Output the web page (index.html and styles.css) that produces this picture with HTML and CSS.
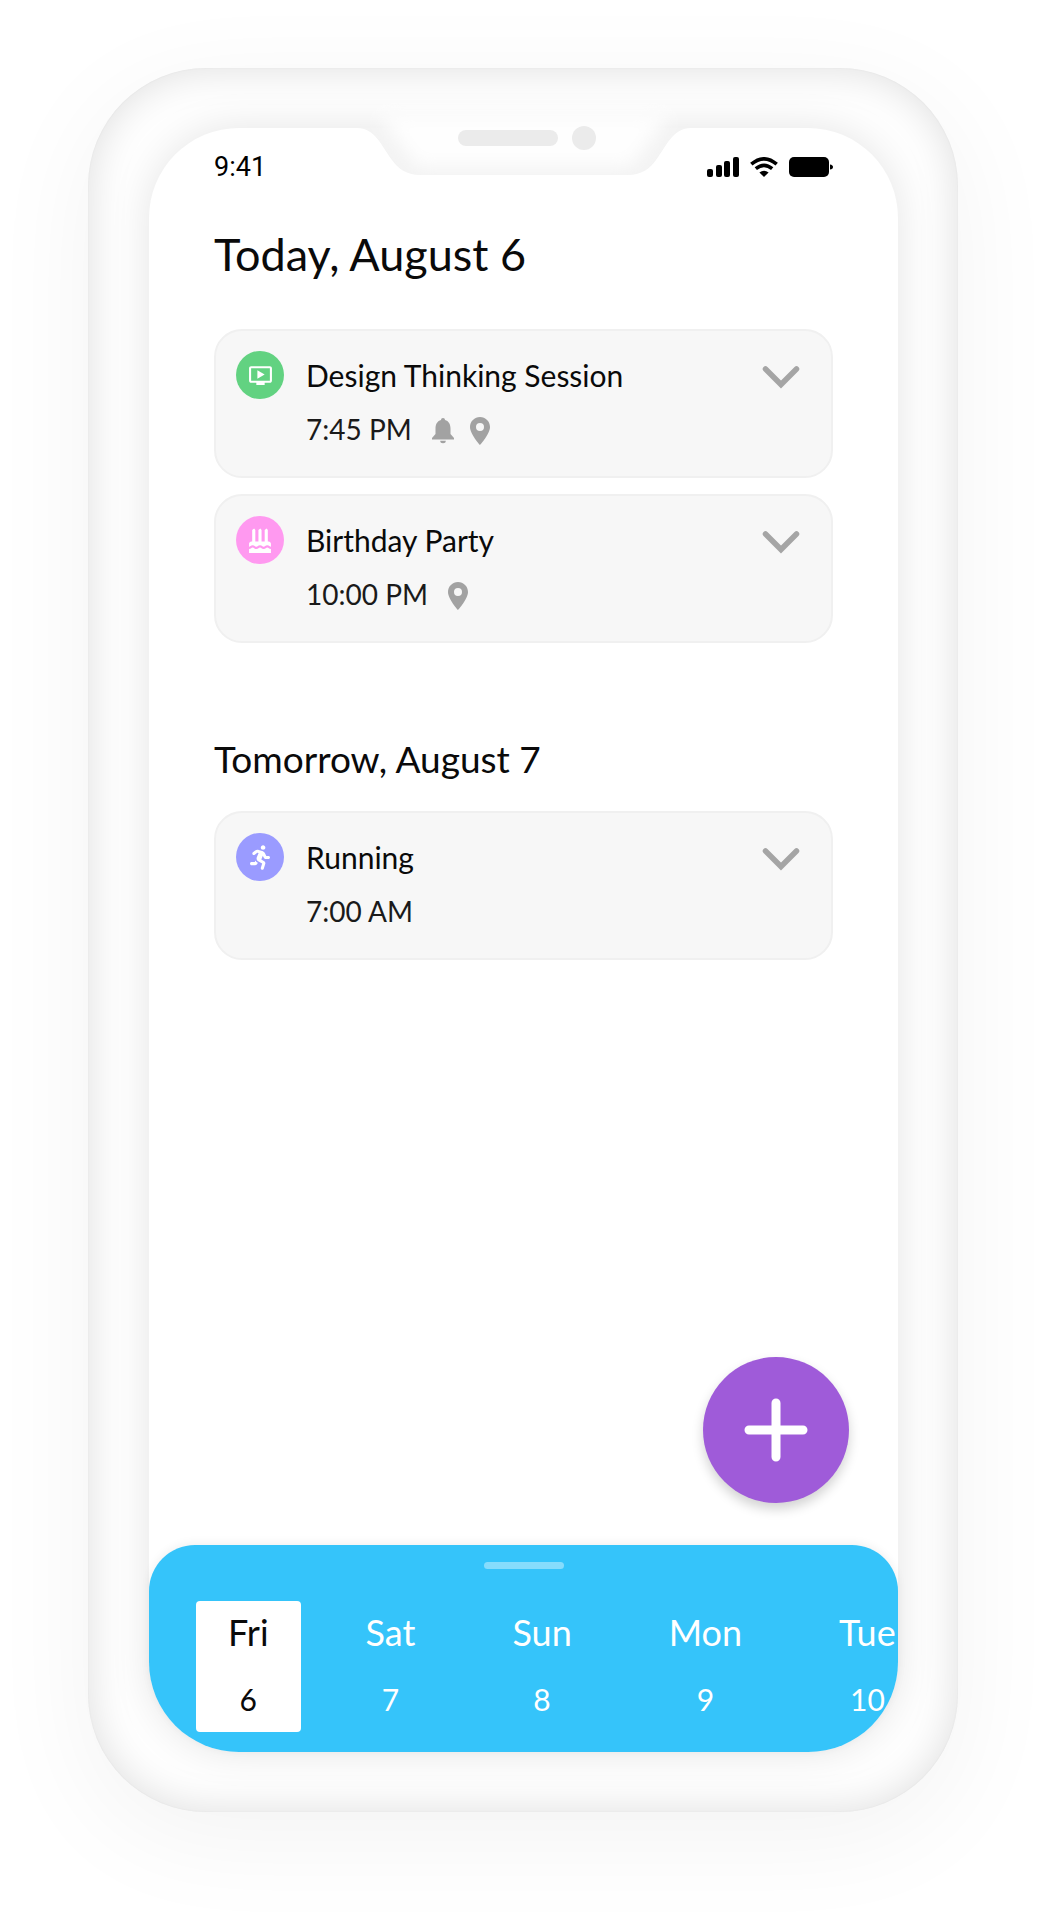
FILE: index.html
```html
<!DOCTYPE html>
<html lang="en">
<head>
<meta charset="utf-8">
<meta name="viewport" content="width=device-width, initial-scale=1">
<title>Agenda</title>
<link rel="stylesheet" href="styles.css">
</head>
<body>
<svg width="0" height="0" class="sprite" aria-hidden="true">
  <symbol id="pin" viewBox="0 0 20 28"><path d="M10 0C4.500 0 0 4.400 0 10c0 7.200 10 18 10 18s10-10.800 10-18C20 4.400 15.500 0 10 0zm0 14a4 4 0 1 1 0-8 4 4 0 0 1 0 8z"/></symbol>
  <symbol id="chevron" viewBox="0 0 38 24"><path d="M3.500 4L19 19.500 34.500 4" fill="none" stroke="currentColor" stroke-width="5.500" stroke-linecap="round"/></symbol>
</svg>
<div class="phone">
  <div class="screen">
    <div class="notch">
      <svg viewBox="0 0 374 85" width="374" height="85" aria-hidden="true">
        <defs>
          <filter id="soft" x="-30%" y="-60%" width="160%" height="220%"><feGaussianBlur stdDeviation="9"/></filter>
          <clipPath id="cut"><path d="M20 37C38 37 44 54 55 69C61 77 68 84 84 84H290C306 84 313 77 319 69C330 54 336 37 354 37V0H20z"/></clipPath>
        </defs>
        <path d="M20 37C38 37 44 54 55 69C61 77 68 84 84 84H290C306 84 313 77 319 69C330 54 336 37 354 37z" fill="#f3f3f3"/>
        <g clip-path="url(#cut)"><path d="M40 22H334L294 76H80z" fill="#fefefe" filter="url(#soft)"/></g>
        <rect x="121" y="39" width="100" height="16" rx="8" fill="#ebebeb"/>
        <circle cx="247" cy="47" r="12" fill="#ebebeb"/>
      </svg>
    </div>

    <header class="status">
      <time>9:41</time>
      <div class="indicators">
        <svg viewBox="0 0 32 20" width="32" height="20" role="img" aria-label="Signal"><rect y="12" width="6" height="8" rx="2"/><rect x="9" y="8" width="6" height="12" rx="2"/><rect x="17" y="4" width="6" height="16" rx="2"/><rect x="26" width="6" height="20" rx="2"/></svg>
        <svg viewBox="0 0 28 20" width="28" height="20" role="img" aria-label="Wi-Fi"><g fill="none" stroke="currentColor" stroke-width="3.600"><path d="M1.300 7.200Q14 -3.500 26.700 7.200"/><path d="M5.800 11.700Q14 5 22.200 11.700"/></g><path d="M9.400 15.600Q14 12 18.600 15.600L14 20z"/></svg>
        <svg viewBox="0 0 44 20" width="44" height="20" role="img" aria-label="Battery"><rect width="40" height="20" rx="5"/><path d="M41 7.500q3 .500 3 2.500t-3 2.500z"/></svg>
      </div>
    </header>

    <main class="agenda">
      <section class="day">
        <h1>Today, August 6</h1>
        <article class="card">
          <span class="badge green"><svg viewBox="0 0 24 24" width="25" height="25" aria-hidden="true"><path d="M21 3H3c-1.110 0-2 .890-2 2v12c0 1.100.890 2 2 2h5v2h8v-2h5c1.100 0 1.990-.900 1.990-2L23 5c0-1.110-.900-2-2-2zm0 14H3V5h18v12zm-5-6l-7 4V7z"/></svg></span>
          <h3>Design Thinking Session</h3>
          <button class="expand" aria-label="Expand"><svg width="38" height="24" aria-hidden="true"><use href="#chevron"/></svg></button>
          <div class="when"><time>7:45 PM</time>
            <svg viewBox="0 0 22 26" width="22" height="26" role="img" aria-label="Reminder"><path d="M11 0c-1.200 0-2 .900-2 2C5.500 3 3.500 6 3.500 10.500v5.500L0 20v1.500h22V20l-3.500-4v-5.500C18.500 6 16.500 3 13 2c0-1.100-.800-2-2-2zM8.200 22.800a2.800 2.500 0 0 0 5.600 0z"/></svg>
            <svg width="20" height="28" role="img" aria-label="Location"><use href="#pin"/></svg>
          </div>
        </article>
        <article class="card">
          <span class="badge pink"><svg viewBox="0 0 448 512" width="22" height="25" aria-hidden="true"><path d="M448 384c-28 0-31.300-32-74.500-32-43.400 0-46.800 32-74.800 32-27.700 0-31.400-32-74.700-32-42.800 0-47.200 32-74.500 32-28.100 0-31.200-32-74.800-32C31.200 352 28.100 384 0 384v-60c0-26.500 21.500-48 48-48h16V80h64v196h64V80h64v196h64V80h64v196h16c26.500 0 48 21.500 48 48zm0 128H0v-80c43.400 0 46.800-32 74.700-32 28 0 31.300 32 74.800 32 42.800 0 47.200-32 74.500-32 28.100 0 31.200 32 74.700 32 43.400 0 46.800-32 74.800-32 27.500 0 31.300 32 74.500 32zM64 90V40l40-30 24 30v50zm128 0V40l40-30 24 30v50zm128 0V40l40-30 24 30v50z"/></svg></span>
          <h3>Birthday Party</h3>
          <button class="expand" aria-label="Expand"><svg width="38" height="24" aria-hidden="true"><use href="#chevron"/></svg></button>
          <div class="when"><time>10:00 PM</time>
            <svg width="20" height="28" role="img" aria-label="Location"><use href="#pin"/></svg>
          </div>
        </article>
      </section>

      <section class="day">
        <h2>Tomorrow, August 7</h2>
        <article class="card">
          <span class="badge violet"><svg viewBox="0 0 416 512" width="20" height="25" aria-hidden="true"><path d="M272 96c26.510 0 48-21.490 48-48S298.510 0 272 0s-48 21.490-48 48 21.490 48 48 48zM113.690 317.470l-14.800 34.520H32c-17.670 0-32 14.330-32 32s14.330 32 32 32h77.450c19.250 0 36.580-11.440 44.110-29.090l8.790-20.520-10.670-6.300c-17.320-10.230-30.060-25.370-37.990-42.610zM384 223.990h-44.030l-26.060-53.250c-12.500-25.550-35.450-44.230-61.780-50.940l-71.080-21.140c-28.300-6.800-57.770-.550-80.840 17.140l-39.670 30.410c-14.030 10.750-16.690 30.830-5.920 44.860s30.840 16.660 44.860 5.920l39.690-30.410c7.670-5.890 17.440-8 25.270-6.140l14.700 4.370-37.460 87.390c-12.620 29.480-1.310 64.010 26.300 80.310l84.980 50.170-27.470 87.730c-5.280 16.860 4.110 34.820 20.970 40.090 3.190 1 6.410 1.480 9.580 1.480 13.610 0 26.230-8.770 30.520-22.450l31.640-101.060c5.910-20.770-2.890-43.080-21.640-54.390l-61.240-36.140 31.310-78.280 20.270 41.430c8 16.340 24.920 26.890 43.110 26.890H384c17.670 0 32-14.330 32-32s-14.330-31.990-32-31.990z"/></svg></span>
          <h3>Running</h3>
          <button class="expand" aria-label="Expand"><svg width="38" height="24" aria-hidden="true"><use href="#chevron"/></svg></button>
          <div class="when"><time>7:00 AM</time></div>
        </article>
      </section>
    </main>

    <button class="add" aria-label="Add event"><svg viewBox="0 0 64 64" width="64" height="64" aria-hidden="true"><path d="M32 5v54M5 32h54" stroke="currentColor" stroke-width="9" stroke-linecap="round"/></svg></button>

    <nav class="week" aria-label="Days">
      <span class="handle"></span>
      <div class="days">
        <button class="date active"><span>Fri</span><b>6</b></button>
        <button class="date"><span>Sat</span><b>7</b></button>
        <button class="date"><span>Sun</span><b>8</b></button>
        <button class="date"><span>Mon</span><b>9</b></button>
        <button class="date"><span>Tue</span><b>10</b></button>
      </div>
    </nav>
  </div>
</div>
</body>
</html>
```

FILE: styles.css
```css
* { box-sizing: border-box; }

body {
  margin: 0;
  min-height: 100vh;
  padding: 68px 88px 108px;
  display: flex;
  justify-content: center;
  background: #fff;
  color: #0a0a0a;
  font-family: Lato, "Noto Sans", sans-serif;
}

h1, h2, h3 { margin: 0; font-weight: 400; }

button {
  padding: 0;
  border: 0;
  background: none;
  color: inherit;
  font: inherit;
  cursor: pointer;
}

svg { display: block; fill: currentColor; flex: none; }
.sprite { position: absolute; }

.phone {
  flex: 1;
  max-width: 870px;
  display: flex;
  padding: 60px 60px 60px 61px;
  border-radius: 118px;
  background: #fefefe;
  box-shadow:
    inset 0 0 2px rgba(0, 0, 0, .06),
    inset 0 0 40px rgba(0, 0, 0, .13),
    0 24px 110px rgba(0, 0, 0, .05);
}

.screen {
  position: relative;
  flex: 1;
  min-width: 0;
  display: flex;
  flex-direction: column;
  border-radius: 90px;
  background: #fff;
  box-shadow: 0 0 40px rgba(0, 0, 0, .1);
}

.notch {
  position: absolute;
  top: -37px;
  left: 0;
  right: 0;
  display: flex;
  justify-content: center;
}

.status {
  display: flex;
  justify-content: space-between;
  align-items: center;
  height: 36px;
  margin: 21px 65px 0;
  color: #000;
  font: 27px/36px Roboto, sans-serif;
}
.indicators { display: flex; align-items: center; gap: 11px; }

.agenda { margin: 43px 65px 0; }
.day + .day { margin-top: 94px; }

h1 { margin-bottom: 49px; font-size: 45px; line-height: 52px; }
h2 { margin-bottom: 30px; font-size: 37px; line-height: 44px; }

.card {
  display: grid;
  grid-template-columns: 48px 1fr auto;
  grid-template-rows: 54px 54px;
  column-gap: 22px;
  align-items: center;
  padding: 17px 31px 20px 20px;
  border: 2px solid #f0f0f0;
  border-radius: 28px;
  background: #f7f7f7;
}
.card + .card { margin-top: 16px; }
.card h3 { font-size: 30px; }

.badge {
  display: grid;
  place-items: center;
  height: 48px;
  border-radius: 50%;
  color: #fff;
}
.green { background: #62d281; }
.pink { background: #ff99f0; }
.violet { background: #9a9bff; }

.expand { padding-top: 4px; color: #a5a5a5; }

.when {
  grid-column: 2;
  display: flex;
  align-items: center;
  gap: 16px;
  color: #a2a2a2;
}
.when svg { margin-top: 4px; }
.when time { color: #1a1a1a; font-size: 28px; margin-right: 4px; }

.add {
  display: grid;
  place-items: center;
  width: 146px;
  height: 146px;
  margin: auto 49px 42px auto;
  border-radius: 50%;
  background: #9f5bd9;
  color: #fff;
  box-shadow: 0 6px 12px rgba(0, 0, 0, .18);
}

.week {
  overflow: hidden;
  padding: 17px 0 20px;
  border-radius: 46px 46px 90px 90px;
  background: #35c4fa;
  color: #fff;
  box-shadow: 0 -2px 10px rgba(0, 0, 0, .06);
}
.handle {
  display: block;
  width: 80px;
  height: 7px;
  margin: 0 auto 32px;
  border-radius: 4px;
  background: #86dcfc;
}
.days { display: flex; gap: 33px; padding-left: 47px; }
.date {
  flex: none;
  display: grid;
  grid-template-rows: 62px 69px;
  place-items: center;
  padding: 0 32px;
  border-radius: 4px;
  font-size: 36px;
}
.date b { padding-top: 2px; font-size: 30px; font-weight: 400; }
.active { background: #fff; color: #0a0a0a; }
```
